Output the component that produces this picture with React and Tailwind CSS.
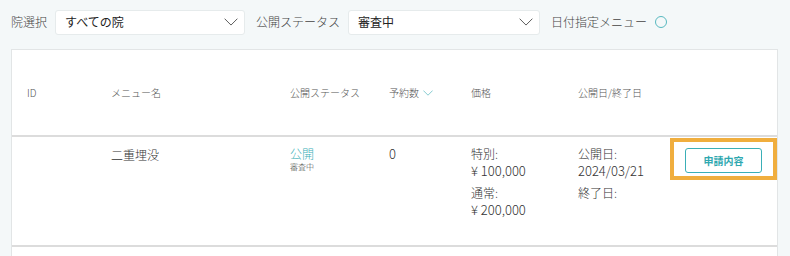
const jp = { fontFamily: '"Noto Sans CJK JP", "Noto Sans", sans-serif' };

function Chevron({ className }) {
    return (
        <svg className={className} viewBox="0 0 16 9" fill="none" stroke="currentColor" strokeWidth="1.1" strokeLinecap="round" strokeLinejoin="round">
            <polyline points="1,1 8,8 15,1" />
        </svg>
    );
}

function SelectBox({ value, width }) {
    return (
        <div className={`${width} h-[25px] bg-white border border-[#e6ebec] rounded-[3px] flex items-center justify-between pl-[9px] pr-[6px]`}>
            <span className="text-[12px] font-normal text-[#222]">{value}</span>
            <Chevron className="w-[14px] h-[8px] text-[#555]" />
        </div>
    );
}

export default function App() {
    return (
        <div className="w-[790px] h-[256px] bg-[#f4f8f9] overflow-hidden font-light" style={jp}>
            {/* filter bar */}
            <div className="flex items-center h-[44px] pl-[11px]">
                <span className="text-[12px] text-[#444] mr-[8px]">院選択</span>
                <SelectBox value="すべての院" width="w-[190px]" />
                <span className="text-[12px] text-[#444] ml-[11px] mr-[8px]">公開ステータス</span>
                <SelectBox value="審査中" width="w-[192px]" />
                <span className="text-[12px] text-[#444] ml-[11px]">日付指定メニュー</span>
                <span className="ml-[8px] w-[12px] h-[12px] rounded-full border border-[#58b9c0]"></span>
            </div>

            {/* table card */}
            <div className="ml-[11px] mt-[5px] w-[767px] bg-white border border-[#e2e5e6]">
                <div className="grid grid-cols-[99px_179px_99px_82px_107px_92px_1fr] h-[87px] items-center border-b-2 border-[#dcdcdc] text-[10px] text-[#555]">
                    <span className="pl-[15px]">ID</span>
                    <span>メニュー名</span>
                    <span>公開ステータス</span>
                    <span className="flex items-center gap-[4px]">
                        予約数
                        <Chevron className="w-[10px] h-[6px] text-[#4fb3bb]" />
                    </span>
                    <span>価格</span>
                    <span>公開日/終了日</span>
                    <span></span>
                </div>

                <div className="grid grid-cols-[99px_179px_99px_82px_107px_92px_1fr] h-[110px] items-start border-b-2 border-[#dcdcdc] text-[#333]">
                    <span></span>
                    <span className="pt-[9px] text-[12px]">二重埋没</span>
                    <div className="pt-[9px] flex flex-col">
                        <span className="text-[12px] leading-[16px] text-[#3aafb7]">公開</span>
                        <span className="text-[8px] leading-[10px] text-[#444]">審査中</span>
                    </div>
                    <span className="pt-[9px] text-[13px] leading-[16px]">0</span>
                    <div className="pt-[8px] flex flex-col text-[12px] leading-[17px]">
                        <span>特別:</span>
                        <span className="text-[13px]">¥ 100,000</span>
                        <span className="mt-[5px]">通常:</span>
                        <span className="text-[13px]">¥ 200,000</span>
                    </div>
                    <div className="pt-[8px] flex flex-col text-[12px] leading-[17px]">
                        <span>公開日:</span>
                        <span className="text-[13px]">2024/03/21</span>
                        <span className="mt-[5px]">終了日:</span>
                    </div>
                    <div className="mt-[1px] w-[107px] h-[42px] border-4 border-[#f0ae3e] pl-[11px] pt-[4px]">
                        <button className="w-[77px] h-[25px] bg-white border border-[#3aafb7] rounded-[3px] text-[10px] font-bold text-[#2fa8b0]">
                            申請内容
                        </button>
                    </div>
                </div>

                {/* next row (cut off) */}
                <div className="h-[40px]"></div>
            </div>
        </div>
    );
}
